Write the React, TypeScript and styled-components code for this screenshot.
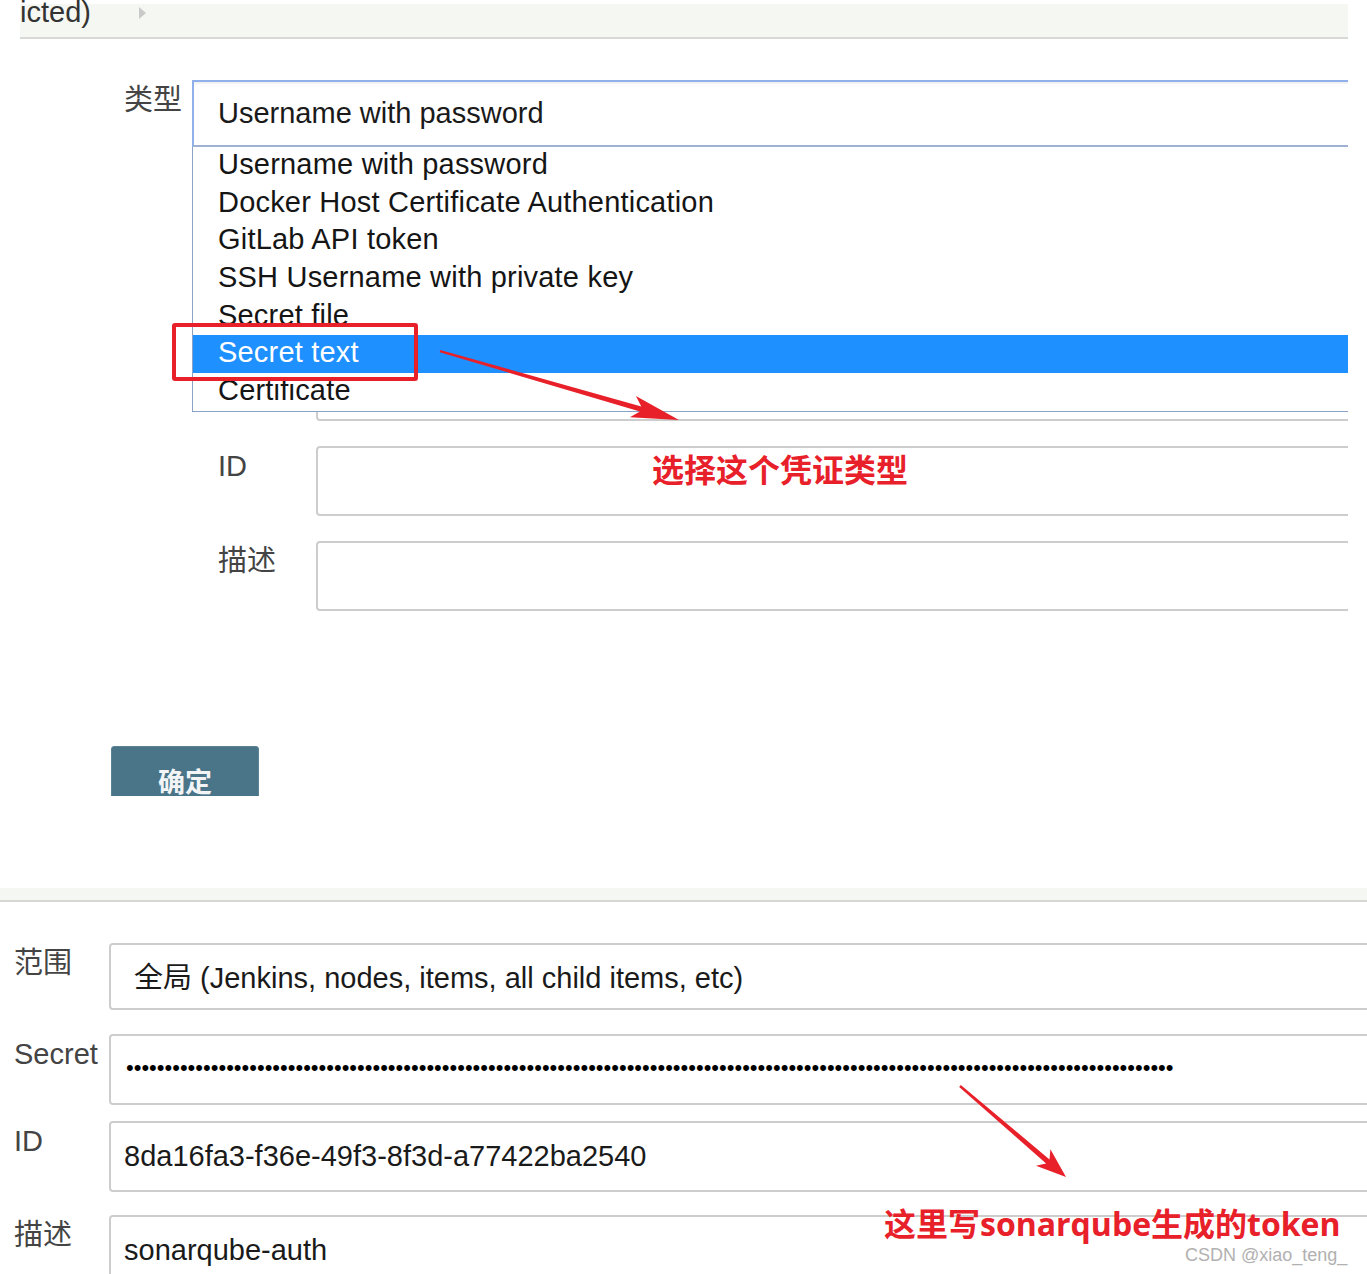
import styled, { createGlobalStyle } from "styled-components";

// #region ##################################################################################### DATA
const KIND_OPTIONS = [
  "Username with password",
  "Docker Host Certificate Authentication",
  "GitLab API token",
  "SSH Username with private key",
  "Secret file",
  "Secret text",
  "Certificate",
];
const SELECTED_KIND = "Secret text";
const SECRET_MASK = "\u2022".repeat(136);
// #endregion

// #region ##################################################################################### STYLES
const GlobalStyle = createGlobalStyle`
  html, body {
    margin: 0;
    padding: 0;
    background: #ffffff;
  }
  body {
    font-family: "Liberation Sans", Arial, "Noto Sans CJK SC", sans-serif;
    color: #222;
  }
`;

const Page = styled.div`
  position: relative;
  width: 1367px;
  height: 1274px;
  overflow: hidden;
  background: #fff;
`;

const TopPanel = styled.section`
  width: 1348px;
  height: 888px;
  overflow: hidden;
  display: flex;
  flex-direction: column;
`;

const HeaderStrip = styled.div`
  margin: 4px 0 0 20px;
  height: 33px;
  background: #f5f7f2;
  border-bottom: 2px solid #d8d9d5;
  display: flex;
  align-items: flex-start;
  gap: 48px;
`;

const HeaderText = styled.span`
  font-size: 29px;
  line-height: 16px;
  color: #333;
`;

const Caret = styled.span`
  margin-top: 3px;
  width: 0;
  height: 0;
  border-left: 7px solid #c9c9c9;
  border-top: 6px solid transparent;
  border-bottom: 6px solid transparent;
`;

const KindRow = styled.div`
  margin-top: 41px;
  display: flex;
  align-items: flex-start;
`;

const FieldLabel = styled.label<{ $width: number; $indent?: number }>`
  flex: 0 0 ${(p) => p.$width}px;
  box-sizing: border-box;
  padding-left: ${(p) => p.$indent ?? 0}px;
  font-family: "Liberation Sans", Arial, "Noto Sans CJK SC", sans-serif;
  font-size: 29px;
  line-height: 40px;
  color: #444;
  white-space: nowrap;
`;

const KindColumn = styled.div`
  position: relative;
  flex: 1;
  min-width: 0;
`;

const SelectBox = styled.div`
  box-sizing: border-box;
  height: 67px;
  margin-right: -20px;
  border: 2px solid #8fb0ea;
  border-bottom-color: #9fb1d2;
  box-shadow: inset 0 2px 2px rgba(0, 0, 0, 0.06);
  padding-left: 24px;
  font-size: 29px;
  line-height: 63px;
  color: #1a1a1a;
  background: #fff;
`;

const OptionList = styled.ul`
  position: absolute;
  top: 67px;
  left: 0;
  right: -20px;
  z-index: 2;
  margin: 0;
  padding: 0;
  list-style: none;
  background: #fff;
  border: 1px solid #8aa2c6;
  border-top: none;
`;

const OptionItem = styled.li<{ $selected?: boolean }>`
  box-sizing: border-box;
  height: 37.7px;
  padding: 0 0 5.7px 25px;
  font-size: 29px;
  line-height: 34px;
  letter-spacing: 0.2px;
  white-space: nowrap;
  color: ${(p) => (p.$selected ? "#ffffff" : "#151515")};
  background: ${(p) => (p.$selected ? "#1e90ff" : "transparent")};
`;

const SubFields = styled.div`
  padding-left: 26px;
  display: flex;
  flex-direction: column;
`;

const FieldRow = styled.div<{ $top: number; $indent?: number }>`
  margin-top: ${(p) => p.$top}px;
  padding-left: ${(p) => p.$indent ?? 0}px;
  display: flex;
  align-items: flex-start;
`;

const FieldBox = styled.div<{ $height: number; $pad?: string; $lh?: number }>`
  flex: 1;
  box-sizing: border-box;
  height: ${(p) => p.$height}px;
  margin-right: -20px;
  border: 2px solid #cdcdcd;
  border-radius: 4px;
  background: #fff;
  padding: ${(p) => p.$pad ?? "0 0 0 13px"};
  font-family: "Liberation Sans", Arial, "Noto Sans CJK SC", sans-serif;
  font-size: 29px;
  line-height: ${(p) => p.$lh ?? 67}px;
  color: #1a1a1a;
  white-space: nowrap;
  overflow: hidden;
`;

const MaskText = styled.span`
  display: block;
  font-size: 22px;
  line-height: 30px;
  color: #000;
`;

const ButtonClip = styled.div`
  margin: 135px 0 0 111px;
  width: 148px;
  height: 50px;
  overflow: hidden;
`;

const OkButton = styled.button`
  box-sizing: border-box;
  width: 148px;
  height: 60px;
  padding: 9px 0 0;
  border: 1px solid #5b8295;
  border-radius: 3px;
  background: #4a7589;
  color: #f2f4f6;
  font-family: "Noto Sans CJK SC", sans-serif;
  font-weight: 700;
  font-size: 27px;
  line-height: 40px;
  text-align: center;
  vertical-align: top;
`;

const BottomPanel = styled.section`
  width: 1367px;
  overflow: hidden;
  display: flex;
  flex-direction: column;
`;

const PanelStrip = styled.div`
  height: 12px;
  background: #f5f7f2;
  border-bottom: 2px solid #d6d7d3;
`;

const HighlightFrame = styled.div`
  position: absolute;
  left: 172px;
  top: 323px;
  width: 246px;
  height: 58px;
  box-sizing: border-box;
  border: 4px solid #e8202a;
  border-radius: 3px;
  z-index: 4;
`;

const ArrowLayer = styled.svg`
  position: absolute;
  left: 0;
  top: 0;
  z-index: 5;
  pointer-events: none;
`;

const Annotation = styled.span<{ $left: number; $top: number }>`
  position: absolute;
  left: ${(p) => p.$left}px;
  top: ${(p) => p.$top}px;
  z-index: 5;
  font-family: "Open Sans", "Noto Sans CJK SC", sans-serif;
  font-weight: 700;
  font-size: 32px;
  line-height: 32px;
  color: #e8202a;
  white-space: nowrap;
`;

const Watermark = styled.span`
  position: absolute;
  left: 1185px;
  top: 1246px;
  z-index: 5;
  font-family: "Liberation Sans", Arial, sans-serif;
  font-size: 18px;
  line-height: 18px;
  color: #b1b1b1;
  white-space: nowrap;
`;
// #endregion

// #region ##################################################################################### COMPONENT
const App = () => {
  return (
    <Page>
      <GlobalStyle />

      <TopPanel>
        <HeaderStrip>
          <HeaderText>icted)</HeaderText>
          <Caret />
        </HeaderStrip>

        <KindRow>
          <FieldLabel $width={192} $indent={124}>
            类型
          </FieldLabel>

          <KindColumn>
            <SelectBox>Username with password</SelectBox>

            <OptionList>
              {KIND_OPTIONS.map((opt) => (
                <OptionItem key={opt} $selected={opt === SELECTED_KIND}>
                  {opt}
                </OptionItem>
              ))}
            </OptionList>

            <SubFields>
              <FieldRow $top={14}>
                <FieldLabel $width={98} />
                <FieldBox $height={70} />
              </FieldRow>
              <FieldRow $top={25}>
                <FieldLabel $width={98} />
                <FieldBox $height={70} />
              </FieldRow>
              <FieldRow $top={25}>
                <FieldLabel $width={98} />
                <FieldBox $height={70} />
              </FieldRow>
              <FieldRow $top={25}>
                <FieldLabel $width={98}>ID</FieldLabel>
                <FieldBox $height={70} />
              </FieldRow>
              <FieldRow $top={25}>
                <FieldLabel $width={98}>描述</FieldLabel>
                <FieldBox $height={70} />
              </FieldRow>
            </SubFields>
          </KindColumn>
        </KindRow>

        <ButtonClip>
          <OkButton type="button">确定</OkButton>
        </ButtonClip>
      </TopPanel>

      <BottomPanel>
        <PanelStrip />

        <FieldRow $top={41} $indent={14}>
          <FieldLabel $width={95}>范围</FieldLabel>
          <FieldBox $height={67} $pad="13px 0 0 23px" $lh={40}>
            全局 (Jenkins, nodes, items, all child items, etc)
          </FieldBox>
        </FieldRow>

        <FieldRow $top={24} $indent={14}>
          <FieldLabel $width={95}>Secret</FieldLabel>
          <FieldBox $height={71} $pad="17px 0 0 15px" $lh={30}>
            <MaskText>{SECRET_MASK}</MaskText>
          </FieldBox>
        </FieldRow>

        <FieldRow $top={16} $indent={14}>
          <FieldLabel $width={95}>ID</FieldLabel>
          <FieldBox $height={71}>8da16fa3-f36e-49f3-8f3d-a77422ba2540</FieldBox>
        </FieldRow>

        <FieldRow $top={23} $indent={14}>
          <FieldLabel $width={95}>描述</FieldLabel>
          <FieldBox $height={71}>sonarqube-auth</FieldBox>
        </FieldRow>
      </BottomPanel>

      {/* annotations drawn over the screenshot */}
      <HighlightFrame />

      <ArrowLayer width={1367} height={1274} viewBox="0 0 1367 1274">
        <polygon
          fill="#e8202a"
          points="440.3,349.9 641.3,406.4 635.9,396.1 679,420 629.9,417.3 639.9,411.4 439.7,352.2"
        />
        <polygon
          fill="#e8202a"
          points="960.8,1085.1 1049.5,1159.4 1050.4,1149.2 1066,1177 1036,1165.8 1046.1,1163.4 959.2,1086.9"
        />
      </ArrowLayer>

      <Annotation $left={652} $top={454}>
        选择这个凭证类型
      </Annotation>
      <Annotation $left={884} $top={1208}>
        这里写sonarqube生成的token
      </Annotation>

      <Watermark>CSDN @xiao_teng_</Watermark>
    </Page>
  );
};
// #endregion

// #region ##################################################################################### EXPORTS
export default App;
// #endregion
